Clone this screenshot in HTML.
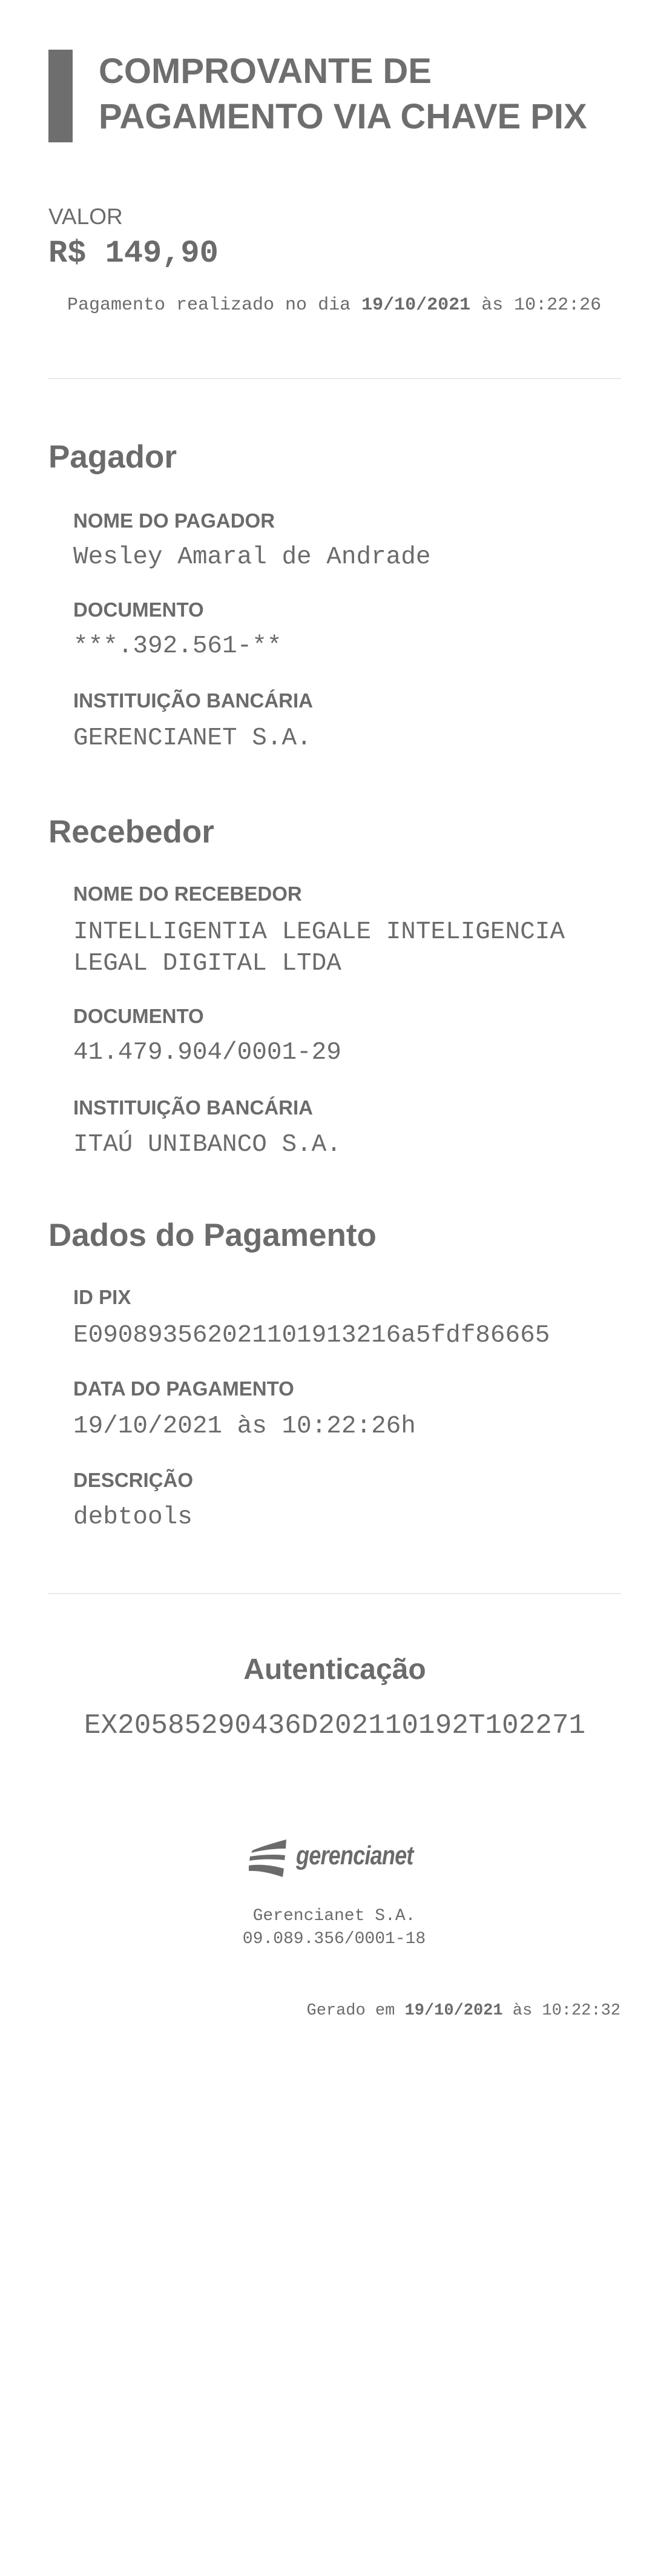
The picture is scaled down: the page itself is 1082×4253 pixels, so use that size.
<!DOCTYPE html>
<html><head><meta charset="utf-8"><style>
html,body{margin:0;padding:0;background:#fff;}
body{width:1082px;height:4253px;position:relative;overflow:hidden;color:#6b6b6b;}
.a{position:absolute;white-space:nowrap;}
.s{font-family:"Liberation Sans",sans-serif;}
.m{font-family:"Liberation Mono",monospace;}
.h{font-family:"Liberation Sans",sans-serif;font-weight:bold;font-size:53px;line-height:53px;left:80px;}
.l{font-family:"Liberation Sans",sans-serif;font-weight:bold;font-size:33px;line-height:33px;left:121px;}
.v{font-family:"Liberation Mono",monospace;font-size:41px;line-height:41px;left:121px;}
.sep{position:absolute;left:80px;width:946px;height:2px;background:#e9e9e9;}
</style></head><body>
<div style="position:absolute;left:80px;top:82px;width:40px;height:153px;background:#6e6e6e"></div>
<div class="a s" style="left:163px;top:80px;font-weight:bold;font-size:58px;line-height:75px;color:#6e6e6e">COMPROVANTE DE<br>PAGAMENTO VIA CHAVE PIX</div>
<div class="a s" style="left:80px;top:339px;font-size:37px;line-height:37px">VALOR</div>
<div class="a m" style="left:80px;top:393px;font-size:52px;line-height:52px;font-weight:bold">R$ 149,90</div>
<div class="a m" style="left:111px;top:489px;font-size:30px;line-height:30px">Pagamento realizado no dia <b>19/10/2021</b> às 10:22:26</div>
<div class="sep" style="top:624px"></div>

<div class="a h" style="top:728px">Pagador</div>
<div class="a l" style="top:843px">NOME DO PAGADOR</div>
<div class="a v" style="top:900px">Wesley Amaral de Andrade</div>
<div class="a l" style="top:990px">DOCUMENTO</div>
<div class="a v" style="top:1047px">***.392.561-**</div>
<div class="a l" style="top:1140px">INSTITUIÇÃO BANCÁRIA</div>
<div class="a v" style="top:1199px">GERENCIANET S.A.</div>

<div class="a h" style="top:1347px">Recebedor</div>
<div class="a l" style="top:1459px">NOME DO RECEBEDOR</div>
<div class="a v" style="top:1513px;line-height:52px">INTELLIGENTIA LEGALE INTELIGENCIA<br>LEGAL DIGITAL LTDA</div>
<div class="a l" style="top:1661px">DOCUMENTO</div>
<div class="a v" style="top:1718px">41.479.904/0001-29</div>
<div class="a l" style="top:1812px">INSTITUIÇÃO BANCÁRIA</div>
<div class="a v" style="top:1870px">ITAÚ UNIBANCO S.A.</div>

<div class="a h" style="top:2013px">Dados do Pagamento</div>
<div class="a l" style="top:2125px">ID PIX</div>
<div class="a v" style="top:2185px">E09089356202110191321​6a5fdf86665</div>
<div class="a l" style="top:2276px">DATA DO PAGAMENTO</div>
<div class="a v" style="top:2335px">19/10/2021 às 10:22:26h</div>
<div class="a l" style="top:2427px">DESCRIÇÃO</div>
<div class="a v" style="top:2485px">debtools</div>
<div class="sep" style="top:2630px"></div>

<div class="a s" style="left:0;width:1106px;text-align:center;top:2733px;font-weight:bold;font-size:48px;line-height:48px">Autenticação</div>
<div class="a m" style="left:0;width:1106px;text-align:center;top:2826px;font-size:46px;line-height:46px">EX20585290436D202110192T102271</div>

<svg class="a" style="left:411px;top:3035px" width="70" height="68" viewBox="0 0 70 68">
<path d="M6 20 C20 14 40 8 62 2 L61 17 C44 17 24 19 4 24 Z" fill="#6b6b6b"/>
<path d="M2 30 C22 27 42 26 60 28 L59 36 C40 34 20 34 1 37 Z" fill="#6b6b6b"/>
<path d="M0 45 C20 42 40 45 58 50 L56 64 C38 58 18 53 0 54 Z" fill="#6b6b6b"/>
</svg>
<div class="a s" style="left:489px;top:3042px;font-size:44px;line-height:44px;font-weight:bold;font-style:italic;transform:scaleX(0.82);transform-origin:left top;letter-spacing:-1px">gerencianet</div>

<div class="a m" style="left:0;width:1104px;text-align:center;top:3145px;font-size:28px;line-height:38px">Gerencianet S.A.<br>09.089.356/0001-18</div>
<div class="a m" style="right:57px;top:3307px;font-size:27px;line-height:27px">Gerado em <b>19/10/2021</b> às 10:22:32</div>
</body></html>
